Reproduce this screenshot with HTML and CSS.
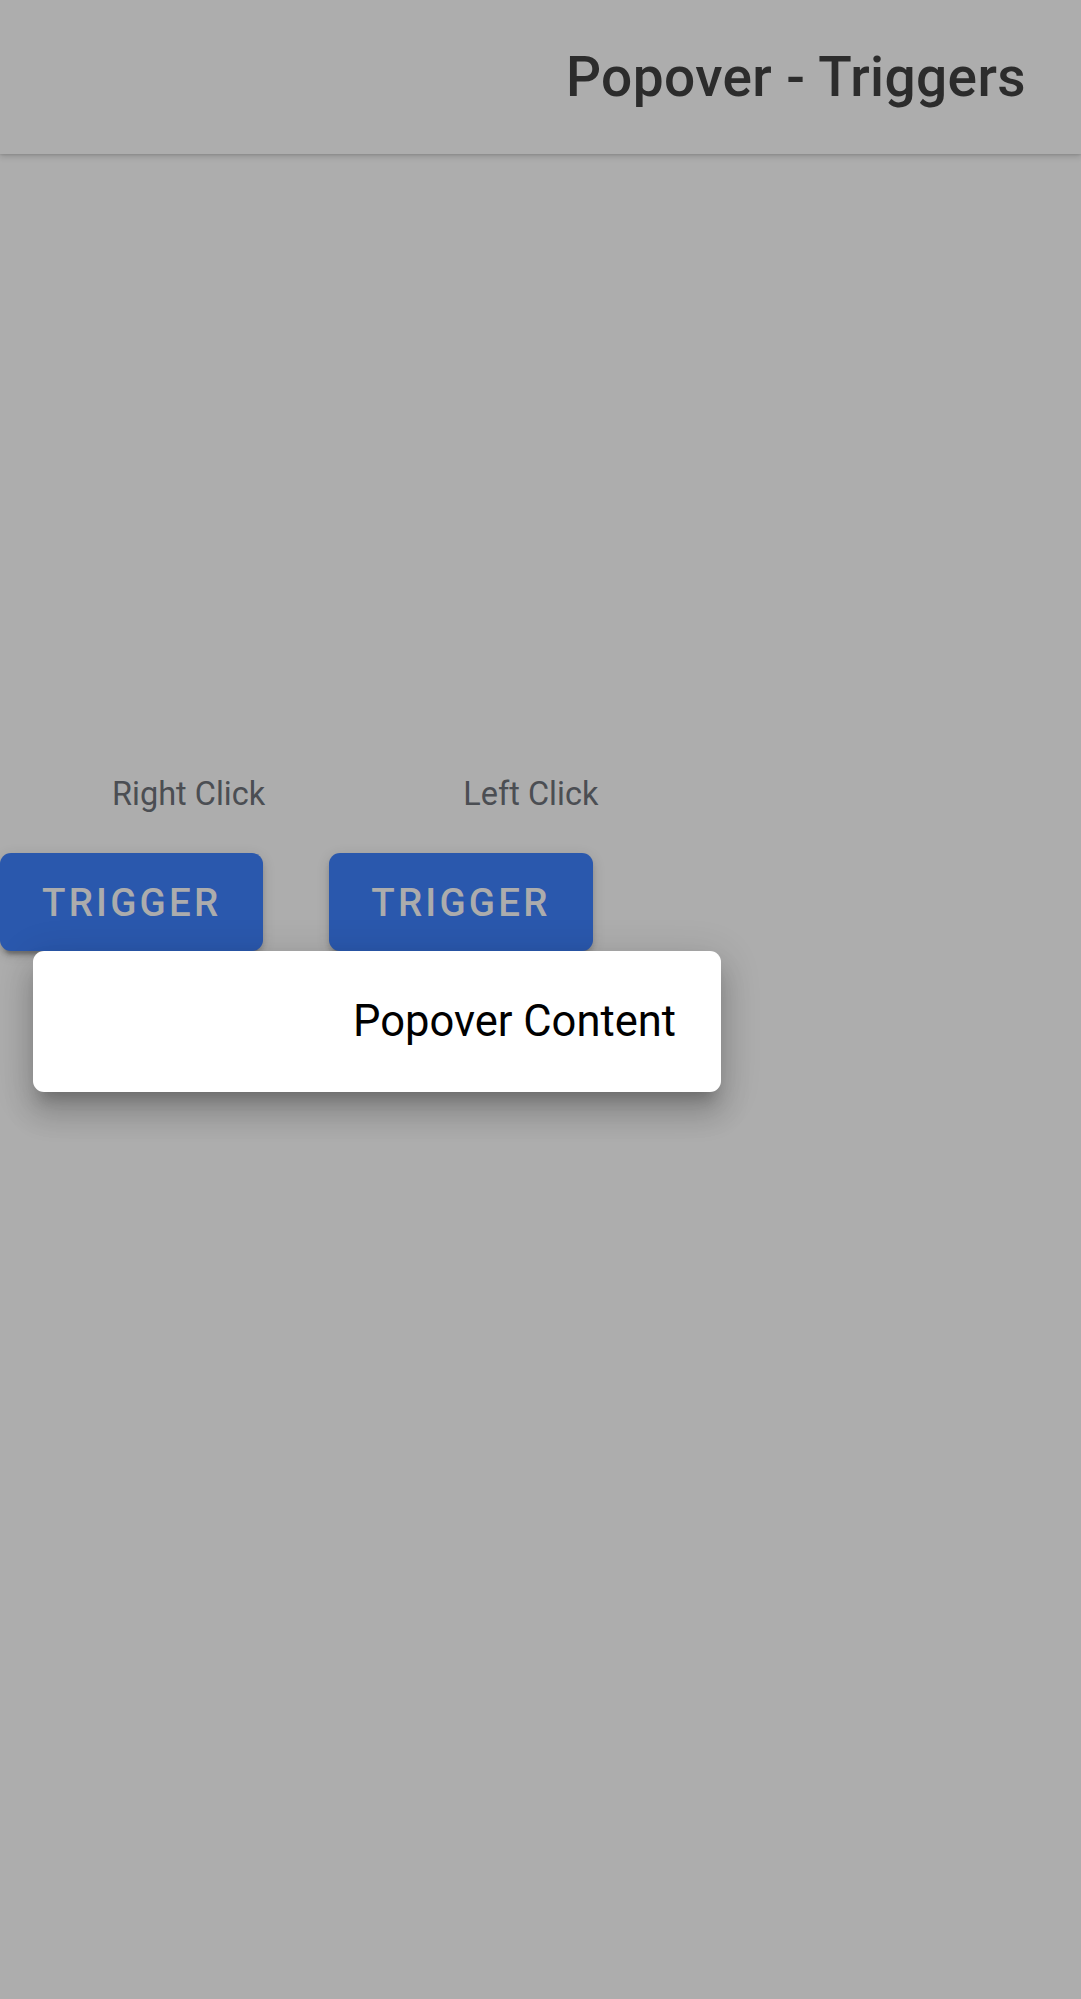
FILE: index.html
```html
<!DOCTYPE html>
<html lang="en">
<head>
<meta charset="utf-8">
<title>Popover - Triggers</title>
<link rel="stylesheet" href="styles.css">
</head>
<body>
<header class="toolbar">
  <h1 class="title">Popover - Triggers</h1>
</header>
<main class="content">
  <div class="triggers">
    <div class="col col-right">
      <div class="label">Right Click</div>
      <button class="btn">Trigger</button>
    </div>
    <div class="col col-left">
      <div class="label">Left Click</div>
      <button class="btn">Trigger</button>
    </div>
  </div>
  <div class="popover">
    <div class="popover-text">Popover Content</div>
  </div>
</main>
</body>
</html>
```
FILE: styles.css
```css
html, body {
  margin: 0;
  padding: 0;
}
body {
  background: #adadad;
  font-family: Roboto, "Noto Sans", sans-serif;
  min-height: 1999px;
  overflow: hidden;
}
.toolbar {
  height: 154px;
  display: flex;
  align-items: center;
  justify-content: flex-end;
  padding: 0 55px;
  background: #adadad;
  position: relative;
  z-index: 2;
  box-shadow: 0 3px 6px rgba(0, 0, 0, 0.14), 0 1px 2px rgba(0, 0, 0, 0.1);
}
.title {
  margin: 0;
  font-size: 55px;
  line-height: 55px;
  font-weight: 500;
  color: #2c2c2c;
  letter-spacing: 0.4px;
}
.content {
  position: relative;
  padding-top: 620px;
}
.triggers {
  display: flex;
  gap: 64px;
}
.col {
  display: flex;
  flex-direction: column;
  align-items: flex-start;
}
.label {
  font-size: 32.5px;
  line-height: 40px;
  color: #4b4e53;
  margin-bottom: 39px;
}
.col-right .label {
  padding-left: 112px;
}
.col-left .label {
  padding-left: 134px;
}
.btn {
  height: 98px;
  padding: 0 42px;
  border: none;
  border-radius: 11px;
  background: #2a58ad;
  color: #acacac;
  font-family: Roboto, "Noto Sans", sans-serif;
  font-size: 38.5px;
  font-weight: 500;
  letter-spacing: 3.2px;
  text-transform: uppercase;
  box-shadow: 0 8px 3px -5px rgba(0, 0, 0, 0.2), 0 5px 5px 0 rgba(0, 0, 0, 0.14), 0 3px 14px 0 rgba(0, 0, 0, 0.12);
}
.popover {
  position: absolute;
  left: 33px;
  top: 797px;
  width: 688px;
  height: 141px;
  background: #ffffff;
  border-radius: 11px;
  display: flex;
  align-items: center;
  justify-content: flex-end;
  box-sizing: border-box;
  padding-right: 45px;
  box-shadow: 0 14px 14px -8px rgba(0, 0, 0, 0.2), 0 22px 28px 3px rgba(0, 0, 0, 0.14), 0 8px 38px 5px rgba(0, 0, 0, 0.12);
}
.popover-text {
  font-size: 43.5px;
  line-height: 50px;
  color: #000000;
}
```
